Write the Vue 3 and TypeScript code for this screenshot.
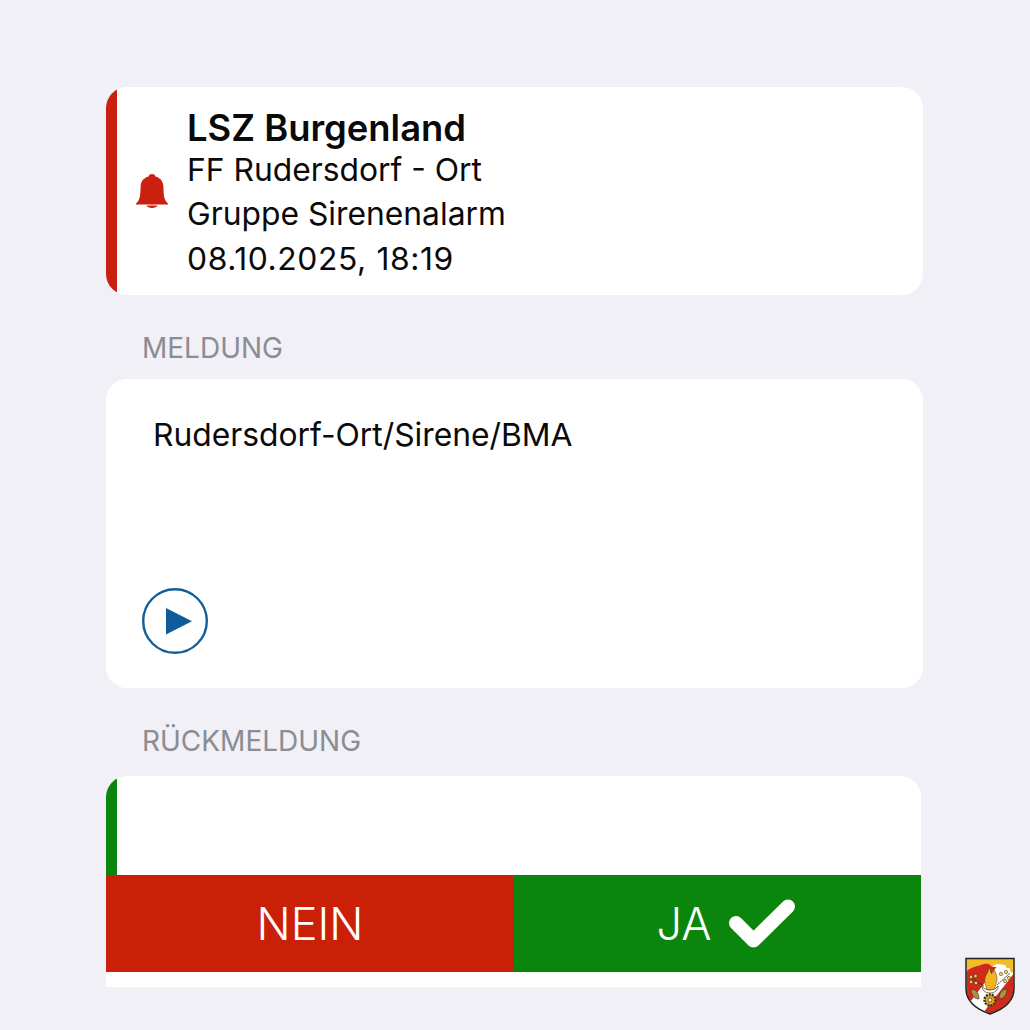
<script setup lang="ts">
const infoLines: string[] = ['FF Rudersdorf - Ort', 'Gruppe Sirenenalarm', '08.10.2025, 18:19']
const message = 'Rudersdorf-Ort/Sirene/BMA'
</script>

<template>
  <div class="page">
    <section class="card head">
      <div class="bar red"></div>
      <div class="bell-col">
        <svg viewBox="0 0 32 34" width="32" height="34">
          <path d="M16 0c-2 0-3.200 1.100-3.400 2.500C7.500 3.800 4.800 7.500 4.600 12.500 4.400 18 4.400 22 3 25.500 2.300 27.300 1 28.500 0 29.500v1h32v-1c-1-1-2.300-2.200-3-4C27.600 22 27.600 18 27.400 12.500 27.200 7.500 24.500 3.800 19.400 2.500 19.200 1.100 18 0 16 0z" fill="#cb2010" />
          <path d="M10.500 31.500h11c-0.500 1.500-2.800 2.500-5.500 2.500s-5-1-5.500-2.500z" fill="#cb2010" />
        </svg>
      </div>
      <div class="info">
        <div class="title">LSZ Burgenland</div>
        <div v-for="line in infoLines" :key="line" class="line">{{ line }}</div>
      </div>
    </section>

    <div class="label first">MELDUNG</div>
    <section class="card msg">
      <div class="msg-text">{{ message }}</div>
      <svg class="play" viewBox="0 0 66 66" width="66" height="66">
        <circle cx="33" cy="33" r="31.800" fill="none" stroke="#135e96" stroke-width="2.400" />
        <path d="M24 20l26 13.200-26 13.200z" fill="#0f5c9c" />
      </svg>
    </section>

    <div class="label second">RÜCKMELDUNG</div>
    <section class="answer">
      <div class="answer-top"><div class="bar green"></div></div>
      <div class="buttons">
        <div class="btn no">NEIN</div>
        <div class="btn yes">
          JA
          <svg viewBox="0 0 68 50" width="68" height="50">
            <path d="M8 24l17.500 17.500L60 7.500" fill="none" stroke="#fff" stroke-width="14" stroke-linecap="round" stroke-linejoin="round" />
          </svg>
        </div>
      </div>
    </section>

    <svg class="crest" viewBox="0 0 50 58" width="50" height="58">
      <!-- shield: white base, yellow chief, red fields either side of the white band -->
      <path d="M1 1.500h48v30c0 13-11 21-24 25.500C12 52.500 1 44.500 1 31.500z" fill="#fff" />
      <path d="M1.500 2h47v14l-3-1-1-4h-3l-1-3c-3 0-5-1-8-1-2 0-3 2-6 2-3-3-5-3-8-2-6 2-12 3-17 7z" fill="#f3bd25" />
      <path d="M1.500 14c5-4 11-5 17-7 3-1 5-1 8 2 1 1 3 1 5 1L6 44c-3-3-4.500-7-4.500-12.500z" fill="#cf2a1c" />
      <path d="M48.500 17v14.500C48.500 44 38 52 25 56.500c-2-.7-4-1.600-5.500-2.500z" fill="#cf2a1c" />
      <!-- hop stems and cones -->
      <path d="M5 20l14 9M45 16L32 28" stroke="#3c2f10" stroke-width="0.700" fill="none" />
      <g fill="#ecd066" stroke="#3c2f10" stroke-width="0.500">
        <circle cx="6" cy="20" r="1.700" /><circle cx="10.500" cy="19" r="1.700" /><circle cx="6" cy="25" r="1.700" /><circle cx="11" cy="26" r="1.700" />
        <circle cx="36" cy="17" r="1.700" /><circle cx="41" cy="15" r="1.700" /><circle cx="44" cy="21" r="1.700" /><circle cx="40" cy="24" r="1.700" />
      </g>
      <!-- leaves -->
      <path d="M6 32c5 0 8 4 8 10-5 0-8-4-8-10zM42 32c-5 0-8 4-8 10 5 0 8-4 8-10z" fill="#a88f45" stroke="#3c2f10" stroke-width="0.600" />
      <!-- flame and fist -->
      <path d="M24 10c2 3 1 6 3 7 1-1 2-3 2-4 3 4 4 10 2 14l-2 6h-7c-1-4-3-8-2-12 1-4 4-6 4-11z" fill="#f3b41f" stroke="#5a3a10" stroke-width="0.500" />
      <path d="M17 29c0 4 3 7 8 7s8-3 8-7c-2 3-5 4-8 4s-6-1-8-4z" fill="#fff" stroke="#3c2f10" stroke-width="0.700" />
      <!-- gear -->
      <circle cx="25" cy="43" r="5.500" fill="#e3a91c" stroke="#4a3410" stroke-width="2.400" stroke-dasharray="2 1" />
      <circle cx="25" cy="43" r="2" fill="#fff" stroke="#4a3410" stroke-width="0.800" />
      <path d="M1 1.500h48v30c0 13-11 21-24 25.500C12 52.500 1 44.500 1 31.500z" fill="none" stroke="#222" stroke-width="1.500" />
    </svg>
  </div>
</template>

<style scoped>
.page {
  position: relative;
  box-sizing: border-box;
  width: 1030px;
  height: 1030px;
  padding: 87px 107px 0 106px;
  background: #f0f0f6;
  font-family: Inter, "Liberation Sans", sans-serif;
  color: #0a0a0a;
}

.card {
  background: #fff;
  border-radius: 21px;
}

.bar {
  width: 11px;
  flex-shrink: 0;
}

.red {
  background: #cb2010;
}

.green {
  height: 100%;
  background: #0b860c;
}

.head {
  display: flex;
  height: 208px;
  overflow: hidden;
}

.bell-col {
  width: 70px;
  display: flex;
  align-items: center;
  justify-content: center;
}

.info {
  padding-top: 21px;
}

.title {
  font-size: 36.400px;
  font-weight: 600;
  line-height: 40px;
}

.line {
  font-size: 31.800px;
  line-height: 44.300px;
}

.line:last-child {
  letter-spacing: 0.600px;
}

.label {
  font-size: 28px;
  color: #8c8c92;
  line-height: 32px;
  padding-left: 36px;
}

.label.first {
  margin-top: 37px;
  margin-bottom: 15px;
}

.label.second {
  margin-top: 37px;
  margin-bottom: 19px;
}

.msg {
  height: 309px;
  box-sizing: border-box;
  padding: 35px 0 0 47px;
  display: flex;
  flex-direction: column;
  align-items: flex-start;
}

.msg-text {
  font-size: 31.800px;
  line-height: 42px;
}

.play {
  margin: 132px 0 0 -11px;
}

.answer {
  width: 815px;
  height: 211px;
  background: #fff;
  border-radius: 21px 21px 0 0;
  overflow: hidden;
}

.answer-top {
  height: 99px;
}

.buttons {
  display: grid;
  grid-template-columns: 408px 407px;
  height: 97px;
}

.btn {
  display: flex;
  align-items: center;
  justify-content: center;
  color: #fff;
  font-size: 45px;
  font-weight: 350;
  gap: 17px;
}

.no {
  background: #cb2008;
}

.yes {
  background: #0b860c;
  padding-left: 18px;
}

.crest {
  position: absolute;
  left: 965px;
  top: 957px;
}
</style>

<style>
body {
  margin: 0;
  background: #f0f0f6;
}
</style>
